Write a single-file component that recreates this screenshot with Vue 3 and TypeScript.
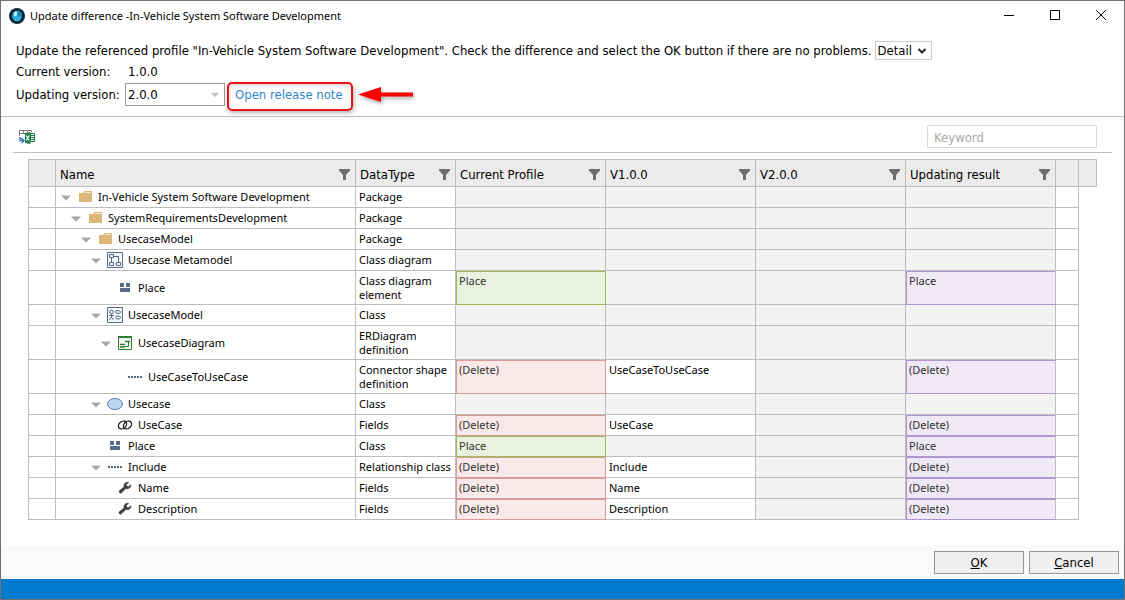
<script setup lang="ts">
import { ref } from 'vue'

type IconName = 'folder' | 'metamodel' | 'place' | 'usecases' | 'er' | 'dots' | 'ellipse' | 'link' | 'wrench'
type Mark = 'empty' | 'plain' | 'added' | 'deleted' | 'result'

interface Cell {
  text: string
  mark: Mark
}

interface Row {
  level: number
  open: boolean
  icon: IconName
  name: string
  type: string
  cells: Cell[]
}

const empty: Cell = { text: '', mark: 'empty' }
const added = (text: string): Cell[] => [{ text, mark: 'added' }, empty, empty, { text, mark: 'result' }]
const deleted = (text: string): Cell[] => [
  { text: '(Delete)', mark: 'deleted' },
  { text, mark: 'plain' },
  empty,
  { text: '(Delete)', mark: 'result' },
]
const same: Cell[] = [empty, empty, empty, empty]

const rows: Row[] = [
  { level: 0, open: true, icon: 'folder', name: 'In-Vehicle System Software Development', type: 'Package', cells: same },
  { level: 1, open: true, icon: 'folder', name: 'SystemRequirementsDevelopment', type: 'Package', cells: same },
  { level: 2, open: true, icon: 'folder', name: 'UsecaseModel', type: 'Package', cells: same },
  { level: 3, open: true, icon: 'metamodel', name: 'Usecase Metamodel', type: 'Class diagram', cells: same },
  { level: 4, open: false, icon: 'place', name: 'Place', type: 'Class diagram element', cells: added('Place') },
  { level: 3, open: true, icon: 'usecases', name: 'UsecaseModel', type: 'Class', cells: same },
  { level: 4, open: true, icon: 'er', name: 'UsecaseDiagram', type: 'ERDiagram definition', cells: same },
  { level: 5, open: false, icon: 'dots', name: 'UseCaseToUseCase', type: 'Connector shape definition', cells: deleted('UseCaseToUseCase') },
  { level: 3, open: true, icon: 'ellipse', name: 'Usecase', type: 'Class', cells: same },
  { level: 4, open: false, icon: 'link', name: 'UseCase', type: 'Fields', cells: deleted('UseCase') },
  { level: 3, open: false, icon: 'place', name: 'Place', type: 'Class', cells: added('Place') },
  { level: 3, open: true, icon: 'dots', name: 'Include', type: 'Relationship class', cells: deleted('Include') },
  { level: 4, open: false, icon: 'wrench', name: 'Name', type: 'Fields', cells: deleted('Name') },
  { level: 4, open: false, icon: 'wrench', name: 'Description', type: 'Fields', cells: deleted('Description') },
]

const headings = ['Name', 'DataType', 'Current Profile', 'V1.0.0', 'V2.0.0', 'Updating result']
const version = ref('2.0.0')
const keyword = ref('')
</script>

<template>
  <div class="dialog">
    <header class="titlebar">
      <svg class="app-icon" viewBox="0 0 16 16" aria-hidden="true">
        <circle cx="8" cy="8" r="8" fill="#0a2a3c" />
        <ellipse cx="8" cy="8" rx="4.800" ry="5.300" fill="#2eb0d8" />
        <path d="M8.500 2.500a5 5 0 0 1 4.500 5.500l-4.500 1z" fill="#1b86ad" />
        <ellipse cx="6.500" cy="5.800" rx="1.500" ry="2.400" fill="#c9f0fa" transform="rotate(15 6.500 5.800)" />
      </svg>
      <h1>Update difference -In-Vehicle System Software Development</h1>
      <div class="window-buttons">
        <button type="button" aria-label="Minimize">
          <svg viewBox="0 0 12 12" aria-hidden="true"><path d="M1 5.500h10" /></svg>
        </button>
        <button type="button" aria-label="Maximize">
          <svg viewBox="0 0 12 12" aria-hidden="true"><path d="M1.500.500h9v9h-9z" /></svg>
        </button>
        <button type="button" aria-label="Close">
          <svg viewBox="0 0 12 12" aria-hidden="true"><path d="M1 0l10 10M11 0L1 10" /></svg>
        </button>
      </div>
    </header>

    <section class="summary">
      <div class="line">
        <span>Update the referenced profile "In-Vehicle System Software Development". Check the difference and select the OK button if there are no problems.</span>
        <button type="button" class="detail" aria-expanded="false">
          Detail
          <svg viewBox="0 0 10 6" aria-hidden="true"><path d="M1.500 1L5 4.500 8.500 1" fill="none" stroke="#222" stroke-width="2" /></svg>
        </button>
      </div>
      <div class="line">
        <span class="caption">Current version:</span>
        <span class="value">1.0.0</span>
      </div>
      <div class="line line-version">
        <label class="caption" for="version">Updating version:</label>
        <span class="version">
          <select id="version" v-model="version">
            <option>2.0.0</option>
          </select>
          <svg viewBox="0 0 8 4" aria-hidden="true"><path d="M0 0h8L4 4z" fill="#bdbdbd" /></svg>
        </span>
        <span class="note">
          <a href="#release-note">Open release note</a>
          <svg class="pointer" viewBox="0 0 58 20" aria-hidden="true">
            <path d="M1 9.500L24 2v5.500h32v4H24V17z" fill="#fe0000" />
          </svg>
        </span>
      </div>
    </section>

    <main>
      <div class="toolbar">
        <button type="button" class="export" aria-label="Export to Excel">
          <svg viewBox="0 0 16 16" aria-hidden="true">
            <path d="M.5 7V1.500h12V3M1 4.500h5M4.500 1.500v3M8.500 1.500v2" fill="none" stroke="#7b7b7b" />
            <path d="M1 8v3.500h3.500M2.500 9L5 11.500 2.500 14" fill="none" stroke="#3578b5" stroke-width="1.500" />
            <path d="M6 4l5.500-1v12L6 14z" fill="#217c4b" />
            <path d="M11.500 4.500h4v8h-4z" fill="#fff" stroke="#217c4b" />
            <path d="M12 6.500h3M12 8.500h3M12 10.500h3" stroke="#217c4b" />
            <path d="M7.200 6.500l3 5M10.200 6.500l-3 5" stroke="#fff" stroke-width="1.200" />
          </svg>
        </button>
        <input v-model="keyword" type="text" placeholder="Keyword" aria-label="Keyword" />
      </div>

      <div class="grid">
        <table>
          <colgroup>
            <col class="c-mark" />
            <col />
            <col class="c-type" />
            <col v-for="n in 4" :key="n" class="c-value" />
            <col class="c-spare" />
            <col class="c-scroll" />
          </colgroup>
          <thead>
            <tr>
              <td></td>
              <th v-for="h in headings" :key="h" scope="col">
                <div class="heading">
                  <span>{{ h }}</span>
                  <button type="button" :aria-label="'Filter ' + h">
                    <svg viewBox="0 0 12 12" aria-hidden="true"><path d="M0 0h11v1.500L7 6v5H4V6L0 1.500z" fill="#6e6e6e" /></svg>
                  </button>
                </div>
              </th>
              <td></td>
              <td></td>
            </tr>
          </thead>
          <tbody>
            <tr v-for="(row, i) in rows" :key="i">
              <td></td>
              <td class="name-cell">
                <div class="name" :style="{ paddingLeft: 5 + row.level * 10 + 'px' }">
                  <span class="twisty">
                    <button v-if="row.open" type="button" :aria-label="'Collapse ' + row.name" aria-expanded="true">
                      <svg viewBox="0 0 10 6" aria-hidden="true"><path d="M0 .5h10L5 5.500z" fill="#a6a6a6" /></svg>
                    </button>
                  </span>
                  <svg class="icon" viewBox="0 0 16 16" aria-hidden="true">
                    <g v-if="row.icon === 'folder'" fill="#dcb67a">
                      <path d="M2 4h4l1.500-2H15v11H2z" />
                      <path d="M8 3.500h6" stroke="#f6ead6" />
                    </g>
                    <g v-else-if="row.icon === 'metamodel'" fill="none" stroke="#566a85">
                      <path d="M.5.500h15v15H.5z" fill="#f3f6fa" />
                      <path d="M2.500 2.500h4v3h-4zM2.500 10.500h4v3h-4zM9.500 10.500h4v3h-4zM4.500 6v4M7 4.500h4.500V10" />
                    </g>
                    <path v-else-if="row.icon === 'place'" d="M3 3h4v4H3zM9 3h4v4H9zM3 8h10v4H3z" fill="#586c88" />
                    <g v-else-if="row.icon === 'usecases'" fill="none" stroke="#566a85">
                      <path d="M.5.500h15v15H.5z" fill="#f3f6fa" />
                      <circle cx="4.500" cy="5" r="1.800" />
                      <path d="M4.500 7v3M2 8.500h5M4.500 10L2.500 13M4.500 10l2 3" />
                      <ellipse cx="11" cy="5" rx="2.500" ry="1.500" />
                      <ellipse cx="11" cy="10.500" rx="2.500" ry="1.500" />
                    </g>
                    <g v-else-if="row.icon === 'er'" fill="none" stroke="#2f7d32">
                      <path d="M1.500 2h13v12.500h-13z" fill="#f4f8f4" />
                      <path d="M1 2h14" stroke-width="2" />
                      <path d="M8 6.500h5M3 9.500h5M3 12h5" stroke-width="1.500" />
                      <path d="M11.500 7v4.500H8" />
                    </g>
                    <path v-else-if="row.icon === 'dots'" d="M1 8h14" stroke="#586c88" stroke-width="2" stroke-dasharray="2 1" />
                    <ellipse v-else-if="row.icon === 'ellipse'" cx="8" cy="8" rx="7.500" ry="5.500" fill="#bcd5ee" stroke="#5b83bd" />
                    <g v-else-if="row.icon === 'link'" fill="none" stroke="#222" stroke-width="1.400">
                      <ellipse cx="5.500" cy="8" rx="4.500" ry="3.400" transform="rotate(-42 5.500 8)" />
                      <ellipse cx="10.500" cy="8" rx="4.500" ry="3.400" transform="rotate(-42 10.500 8)" />
                    </g>
                    <path
                      v-else
                      d="M13.800 4.700l-2.300 2-1.700-.5-.4-1.700 2.300-2.100C9.800 1.600 7.200 2.800 6.900 5.200c-.1.700 0 1.200.2 1.700L2.500 10.600c-1.400 1.300.5 3.500 2 2.200l4.300-4.200c3 .8 5.800-1.300 5-3.900z"
                      fill="#3c3c3c"
                      stroke="#3c3c3c"
                      stroke-width="0.500"
                    />
                  </svg>
                  <span>{{ row.name }}</span>
                </div>
              </td>
              <td>{{ row.type }}</td>
              <td v-for="(cell, c) in row.cells" :key="c" :class="cell.mark">{{ cell.text }}</td>
              <td></td>
              <td class="blank"></td>
            </tr>
          </tbody>
        </table>
      </div>
    </main>

    <footer>
      <button type="button"><span><u>O</u>K</span></button>
      <button type="button"><span><u>C</u>ancel</span></button>
    </footer>
    <div class="backdrop"></div>
  </div>
</template>

<style>
body {
  margin: 0;
  background: #fff;
}
</style>

<style scoped>
.dialog {
  box-sizing: border-box;
  display: flex;
  flex-direction: column;
  min-height: 100vh;
  border: 1px solid #707070;
  background: #fff;
  color: #000;
  font-family: "DejaVu Sans Condensed", "DejaVu Sans", sans-serif;
  font-size: 13px;
  line-height: 20px;
}

button {
  margin: 0;
  padding: 0;
  border: 0;
  background: none;
  color: inherit;
  font: inherit;
}

svg {
  display: block;
}

.titlebar {
  display: flex;
  align-items: center;
  height: 30px;
  padding-left: 8px;
}

.app-icon {
  width: 16px;
  height: 16px;
}

h1 {
  flex: 1;
  margin: 0 0 0 5px;
  font-family: "Noto Sans", "Open Sans", sans-serif;
  font-size: 11px;
  font-weight: 400;
}

.window-buttons {
  display: flex;
}

.window-buttons button {
  display: flex;
  align-items: center;
  justify-content: center;
  width: 46px;
  height: 30px;
}

.window-buttons svg {
  width: 12px;
  height: 12px;
  fill: none;
  stroke: #000;
}

.summary {
  display: flex;
  flex-direction: column;
  gap: 1px;
  padding: 10px 15px;
  border-bottom: 1px solid #c0c0c0;
}

.line {
  display: flex;
  align-items: center;
  height: 20px;
  white-space: nowrap;
}

.line-version {
  height: 23px;
}

.caption {
  width: 109px;
}

.value {
  padding-left: 3px;
}

.detail {
  display: flex;
  align-items: center;
  align-self: flex-start;
  gap: 5px;
  box-sizing: border-box;
  height: 19px;
  margin-left: 3px;
  padding: 0 4px 0 2px;
  border: 1px solid #ccc;
}

.detail svg {
  width: 10px;
  height: 6px;
}

.version {
  position: relative;
  width: 100px;
  height: 23px;
}

.version select {
  box-sizing: border-box;
  width: 100%;
  height: 100%;
  padding: 0 2px;
  border: 1px solid #999;
  border-radius: 0;
  background: #fff;
  color: #000;
  font: inherit;
  appearance: none;
}

.version svg {
  position: absolute;
  top: 10px;
  right: 6px;
  width: 8px;
  height: 4px;
  pointer-events: none;
}

.note {
  position: relative;
  margin-left: 10px;
}

.note a {
  color: #2f86cc;
  text-decoration: none;
}

.note::before {
  content: "";
  position: absolute;
  inset: -3px -10px -6px -8px;
  border: 2px solid #f01018;
  border-radius: 5px;
  box-shadow: 1px 2px 4px rgba(0, 0, 0, 0.3), inset 1px 2px 4px rgba(0, 0, 0, 0.15);
  pointer-events: none;
}

.pointer {
  position: absolute;
  top: 0;
  left: calc(100% + 14px);
  width: 58px;
  height: 20px;
  filter: drop-shadow(1px 2px 2px rgba(0, 0, 0, 0.35));
}

main {
  flex: 1;
  border-top: 4px solid #fafafa;
}

.toolbar {
  display: flex;
  align-items: center;
  justify-content: space-between;
  height: 31px;
  margin: 0 12px;
  padding: 0 15px 0 6px;
  border-bottom: 1px solid #c0c0c0;
}

.export svg {
  width: 16px;
  height: 16px;
}

.toolbar input {
  box-sizing: border-box;
  width: 170px;
  height: 23px;
  padding: 2px 6px 0;
  border: 1px solid #d9d9d9;
  background: #fff;
  color: #000;
  font: inherit;
}

.toolbar input::placeholder {
  color: #a8a8a8;
  opacity: 1;
}

.grid {
  padding: 6px 27px 0;
}

table {
  width: 100%;
  border-collapse: separate;
  border-spacing: 0;
  table-layout: fixed;
  font-family: "Noto Sans", "Open Sans", sans-serif;
  font-size: 11px;
  line-height: 14px;
}

.c-mark {
  width: 28px;
}

.c-type {
  width: 100px;
}

.c-value {
  width: 150px;
}

.c-spare {
  width: 23px;
}

.c-scroll {
  width: 18px;
}

th,
td {
  box-sizing: border-box;
  padding: 3px 3px 2px;
  border: 0 solid #bdbdbd;
  border-width: 0 1px 1px 0;
  text-align: left;
  vertical-align: top;
  font-weight: 400;
}

tr > :first-child {
  border-left-width: 1px;
}

thead th,
thead td {
  height: 28px;
  padding: 0 4px;
  border-top-width: 1px;
  background: #ebebeb;
  font-family: "DejaVu Sans Condensed", "DejaVu Sans", sans-serif;
  font-size: 13px;
  vertical-align: middle;
}

tbody tr {
  height: 21px;
}

.heading {
  display: flex;
  align-items: center;
  justify-content: space-between;
  padding-top: 3px;
  white-space: nowrap;
}

.heading svg {
  width: 12px;
  height: 12px;
}

.name-cell {
  padding: 0;
  vertical-align: middle;
}

.name {
  display: flex;
  align-items: center;
  white-space: nowrap;
}

.twisty {
  width: 10px;
  margin-right: 6px;
  padding-top: 2px;
}

.twisty button {
  display: block;
}

.twisty svg {
  width: 10px;
  height: 6px;
}

.icon {
  width: 16px;
  height: 16px;
  margin-right: 5px;
}

td.empty {
  background: #f3f3f3;
}

td.added {
  border-color: #9bbb59;
  background: #eaf1de;
  box-shadow: inset 1px 1px #9bbb59;
  color: #333;
}

td.deleted {
  border-color: #dc9a98;
  background: #f9eae9;
  box-shadow: inset 1px 1px #dc9a98;
  color: #333;
}

td.result {
  border-bottom-color: #b195d2;
  background: #efe9f6;
  box-shadow: inset 1px 1px #b195d2;
  color: #333;
}

td.blank {
  border-width: 0;
}

footer {
  display: flex;
  align-items: center;
  justify-content: flex-end;
  gap: 5px;
  height: 33px;
  padding: 0 5px;
  background: #fafafa;
}

footer button {
  box-sizing: border-box;
  width: 90px;
  height: 23px;
  border: 1px solid #999;
  background: #efefef;
}

.backdrop {
  height: 20px;
  background: #007acf;
}
</style>
